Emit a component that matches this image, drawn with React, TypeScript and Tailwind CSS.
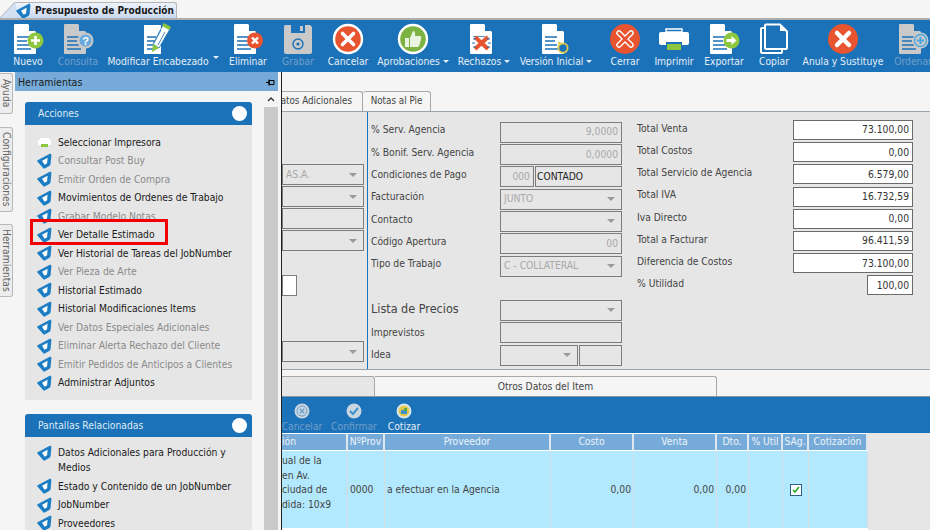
import React from "react";

const font = "[font-family:'DejaVu_Sans',sans-serif] [font-stretch:condensed]";

// page with folded corner, used by most toolbar buttons
const Page: React.FC<{ fill?: string }> = ({ fill = "#fff" }) => (
  <>
    <path d="M3 1h13l8 8v21a1 1 0 0 1-1 1H3a1 1 0 0 1-1-1V2a1 1 0 0 1 1-1z" fill={fill} />
    <path d="M17 1.500l6.500 6.500H17z" fill="#1c72b8" />
    <path d="M5 14h12M5 18h10M5 22h12M5 26h14" stroke="#1c72b8" strokeWidth="1.400" />
  </>
);

const NuevoIcon = () => (
  <svg width="32" height="32" viewBox="0 0 32 32">
    <Page />
    <circle cx="23.500" cy="17.500" r="8" fill="#8dc63f" />
    <path d="M23.500 13v9M19 17.500h9" stroke="#fff" strokeWidth="2.600" />
  </svg>
);
const ConsultaIcon = () => (
  <svg width="32" height="32" viewBox="0 0 32 32">
    <Page fill="#c9c9c9" />
    <circle cx="23.500" cy="17.500" r="8" fill="#c9c9c9" />
    <circle cx="23.500" cy="17.500" r="6" fill="#6aa9dc" />
    <text x="23.500" y="21.500" textAnchor="middle" fontSize="11" fontWeight="700" fill="#fff" fontFamily="Liberation Sans">?</text>
  </svg>
);
const ModificarIcon = () => (
  <svg width="32" height="32" viewBox="0 0 32 32">
    <path d="M2 2h17v29H2z" fill="#fff" />
    <path d="M5 14h9M5 18h8M5 22h7M5 26h9" stroke="#1c72b8" strokeWidth="1.400" />
    <path d="M21 2l7 4-11 19-6-4z" fill="#fff" stroke="#1c72b8" strokeWidth=".8" />
    <path d="M22 0l7 4-2 3-7-4z" fill="#8dc63f" />
    <path d="M11 21l6 4-7 4z" fill="#8dc63f" />
    <path d="M19 7l-7 13M23 9l-7 13" stroke="#1c72b8" strokeWidth=".8" />
  </svg>
);
const EliminarIcon = () => (
  <svg width="32" height="32" viewBox="0 0 32 32">
    <Page />
    <circle cx="23" cy="17.500" r="8" fill="#e8542f" />
    <path d="M20 14.500l6 6M26 14.500l-6 6" stroke="#fff" strokeWidth="2.400" />
  </svg>
);
const GrabarIcon = () => (
  <svg width="32" height="32" viewBox="0 0 32 32">
    <path d="M3 2h25l2 2v25a2 2 0 0 1-2 2H4a2 2 0 0 1-2-2V3z" fill="#c9c9c9" />
    <path d="M9 2h14v8H9z" fill="#1c72b8" />
    <path d="M18 3h3v5h-3z" fill="#c9c9c9" />
    <circle cx="16" cy="21" r="5" fill="none" stroke="#1c72b8" strokeWidth="1.400" />
    <circle cx="16" cy="21" r="1.600" fill="#1c72b8" />
  </svg>
);
const CancelarIcon = () => (
  <svg width="32" height="32" viewBox="0 0 32 32">
    <circle cx="16" cy="16" r="14" fill="#e8542f" stroke="#fff" strokeWidth="2.400" />
    <path d="M10.500 10.500l11 11M21.500 10.500l-11 11" stroke="#fff" strokeWidth="3.600" strokeLinecap="round" />
  </svg>
);
const AprobacionesIcon = () => (
  <svg width="32" height="32" viewBox="0 0 32 32">
    <circle cx="16" cy="16" r="14" fill="#7cb342" stroke="#fff" strokeWidth="2.400" />
    <path d="M8 15h4v9H8zM13 15l3-7c2 0 2.500 2 2 5h5c1.500 0 1.500 2 1 3l-1.500 6c-.3 1-1 2-2 2H13z" fill="#fff" fillOpacity=".85" />
  </svg>
);
const RechazosIcon = () => (
  <svg width="32" height="32" viewBox="0 0 32 32">
    <Page />
    <path d="M2 14h22v14H2z" fill="#fff" />
    <path d="M7 14l13 12M20 14L7 26" stroke="#e8542f" strokeWidth="4" />
    <path d="M5 16h3M19 16h3M4 20h3M20 20h3M5 24h3M19 24h3" stroke="#1c72b8" strokeWidth="1" />
  </svg>
);
const VersionIcon = () => (
  <svg width="32" height="32" viewBox="0 0 32 32">
    <Page />
    <circle cx="23" cy="25" r="4.600" fill="#1c72b8" stroke="#e3c94a" strokeWidth="1.800" />
    <path d="M18 18l1 5 4-2z" fill="#e3c94a" />
  </svg>
);
const CerrarIcon = () => (
  <svg width="32" height="32" viewBox="0 0 32 32">
    <circle cx="16" cy="16" r="15" fill="#e8542f" />
    <path d="M10 10l12 12M22 10L10 22" stroke="#fff" strokeWidth="5.500" strokeLinecap="round" />
    <path d="M10 10l12 12M22 10L10 22" stroke="#e8542f" strokeWidth="2.800" strokeLinecap="round" />
  </svg>
);
const ImprimirIcon = () => (
  <svg width="32" height="32" viewBox="0 0 32 32">
    <path d="M8 6h16v3H8z" fill="none" stroke="#fff" strokeWidth="1.400" />
    <path d="M3 9h26a2 2 0 0 1 2 2v9a2 2 0 0 1-2 2H3a2 2 0 0 1-2-2v-9a2 2 0 0 1 2-2z" fill="#fff" />
    <path d="M8 19h16v8H8z" fill="#1c72b8" />
    <path d="M9 21h14v6H9z" fill="#8dc63f" />
  </svg>
);
const ExportarIcon = () => (
  <svg width="32" height="32" viewBox="0 0 32 32">
    <Page />
    <circle cx="23.500" cy="17.500" r="8" fill="#8dc63f" />
    <path d="M18.500 16h5v-3l5 4.500-5 4.500v-3h-5z" fill="#fff" />
  </svg>
);
const CopiarIcon = () => (
  <svg width="32" height="32" viewBox="0 0 32 32">
    <path d="M6 5H4a1 1 0 0 0-1 1v23a1 1 0 0 0 1 1h19a1 1 0 0 0 1-1v-2" fill="none" stroke="#fff" strokeWidth="2" />
    <path d="M8 1.500h14l7 7V25a1 1 0 0 1-1 1H8a1 1 0 0 1-1-1V2.500a1 1 0 0 1 1-1z" fill="#1c72b8" stroke="#fff" strokeWidth="2" />
    <path d="M22 2v6h6z" fill="#fff" />
  </svg>
);
const AnulaIcon = () => (
  <svg width="32" height="32" viewBox="0 0 32 32">
    <circle cx="16" cy="16" r="15" fill="#e8542f" />
    <path d="M10 10l12 12M22 10L10 22" stroke="#fff" strokeWidth="4.500" strokeLinecap="round" />
  </svg>
);
const OrdenarIcon = () => (
  <svg width="32" height="32" viewBox="0 0 32 32">
    <Page fill="#c9c9c9" />
    <circle cx="23.500" cy="17.500" r="8" fill="#c9c9c9" />
    <circle cx="23.500" cy="17.500" r="6" fill="none" stroke="#4aa8e0" strokeWidth="1.400" />
    <path d="M23.500 14v7M20 17.500h7" stroke="#4aa8e0" strokeWidth="2" />
  </svg>
);

// small blue shield in front of the action links
const Shield = () => (
  <svg width="15" height="16" viewBox="0 0 15 16" className="shrink-0">
    <path d="M.6 7.200L12.400 1c1.200-.6 2.100 0 2 1.300l-.8 8.500c-.1 1-.5 1.600-1.400 2.100l-4.400 2.500c-.7.400-1.300.2-1.700-.4L.4 8.600C.1 8 .1 7.500.6 7.200z" fill="#1c7dc4" />
    <path d="M5 7.700l5.600-2.900-.5 5.400-2.500 1.500z" fill="#fff" />
  </svg>
);

const PrinterSmall = () => (
  <svg width="15" height="15" viewBox="0 0 15 15" className="shrink-0">
    <path d="M3 3h9v2H3z" fill="#fff" />
    <path d="M1 5h13v5H1z" fill="#fff" />
    <path d="M4 9h7v3H4z" fill="#8dc63f" />
  </svg>
);

type ToolItem = { label: string; icon: React.ReactNode; w: string; off?: boolean; caret?: boolean; split?: boolean };

const tools: ToolItem[] = [
  { label: "Nuevo", icon: <NuevoIcon />, w: "w-[50px]" },
  { label: "Consulta", icon: <ConsultaIcon />, off: true, w: "w-[50px]" },
  { label: "Modificar Encabezado", icon: <ModificarIcon />, w: "w-[110px]", split: true },
  { label: "Eliminar", icon: <EliminarIcon />, w: "w-[50px]" },
  { label: "Grabar", icon: <GrabarIcon />, off: true, w: "w-[50px]" },
  { label: "Cancelar", icon: <CancelarIcon />, w: "w-[50px]" },
  { label: "Aprobaciones", icon: <AprobacionesIcon />, w: "w-[80px]", caret: true },
  { label: "Rechazos", icon: <RechazosIcon />, w: "w-[62px]", caret: true },
  { label: "Versión Inicial", icon: <VersionIcon />, w: "w-[82px]", caret: true },
  { label: "Cerrar", icon: <CerrarIcon />, w: "w-[56px]" },
  { label: "Imprimir", icon: <ImprimirIcon />, w: "w-[42px]" },
  { label: "Exportar", icon: <ExportarIcon />, w: "w-[58px]" },
  { label: "Copiar", icon: <CopiarIcon />, w: "w-[42px]" },
  { label: "Anula y Sustituye", icon: <AnulaIcon />, w: "w-[96px]" },
  { label: "Ordenar", icon: <OrdenarIcon />, off: true, w: "w-[44px]" },
];

const ToolCaret = () => <span className="h-0 w-0 border-x-[3px] border-t-[3px] border-x-transparent border-t-[#e4eef7]" />;

const Toolbar = () => (
  <div className="flex h-[54px] shrink-0 overflow-hidden border-t-2 border-[#adadad] bg-[#1c72b8] pl-[3px]">
    {tools.map((t) => (
      <React.Fragment key={t.label}>
        <div className={`${t.w} flex shrink-0 flex-col items-center pt-[3px]`}>
          <div className="h-[32px]">{t.icon}</div>
          <div className={`flex items-center gap-[3px] whitespace-nowrap text-[10.25px] leading-[12px] ${t.off ? "text-[#6f9fca]" : "text-[#e4eef7]"}`}>
            {t.label}
            {t.caret && <ToolCaret />}
          </div>
        </div>
        {t.split && (
          <div className="flex w-[10px] shrink-0 items-start pt-[36px]">
            <ToolCaret />
          </div>
        )}
      </React.Fragment>
    ))}
  </div>
);

const VerticalTab: React.FC<{ label: string; h: string }> = ({ label, h }) => (
  <div className={`${h} flex w-[13px] items-center justify-center rounded-r-[3px] border border-l-0 border-[#b8b8b8] bg-[#ededed]`}>
    <span className="whitespace-nowrap text-[10.25px] text-[#666] [writing-mode:vertical-rl]">{label}</span>
  </div>
);

const actions: [string, boolean][] = [
  ["Consultar Post Buy", false],
  ["Emitir Orden de Compra", false],
  ["Movimientos de Ordenes de Trabajo", true],
  ["Grabar Modelo Notas", false],
  ["Ver Detalle Estimado", true],
  ["Ver Historial de Tareas del JobNumber", true],
  ["Ver Pieza de Arte", false],
  ["Historial Estimado", true],
  ["Historial Modificaciones Items", true],
  ["Ver Datos Especiales Adicionales", false],
  ["Eliminar Alerta Rechazo del Cliente", false],
  ["Emitir Pedidos de Anticipos a Clientes", false],
  ["Administrar Adjuntos", true],
];

const related = ["Estado y Contenido de un JobNumber", "JobNumber", "Proveedores"];

const ActionRow: React.FC<{ text: string; on?: boolean; icon?: React.ReactNode }> = ({ text, on = true, icon }) => (
  <div className="flex h-[18.5px] items-center gap-[6px] pl-[12px]">
    {icon ?? <Shield />}
    <span className={`whitespace-nowrap text-[10.25px] ${on ? "text-[#1a1a1a]" : "text-[#8a8a8a]"}`}>{text}</span>
  </div>
);

const SectionHead: React.FC<{ title: string }> = ({ title }) => (
  <div className="flex h-[23px] items-center justify-between rounded-t-[3px] bg-[#1c72b8] pl-[13px] pr-[5px]">
    <span className="pt-[1px] text-[10.25px] text-[#dfeaf4]">{title}</span>
    <span className="h-[15px] w-[15px] rounded-full bg-white" />
  </div>
);

const Herramientas = () => (
  <div className="flex h-full w-[263px] shrink-0 flex-col bg-[#f5f5f5]">
    <div className="flex h-[19px] shrink-0 items-center justify-between bg-[#76abd9] px-[3px] pt-[3px]">
      <span className="text-[10.5px] text-[#1a1a1a]">Herramientas</span>
      <svg width="9" height="9" viewBox="0 0 9 9">
        <path d="M3 1.500h5v4H3zM3 .5v6M0 3.500h3" fill="none" stroke="#000" strokeWidth="1" />
      </svg>
    </div>
    <div className="flex min-h-0 flex-1">
      <div className="w-[249px] shrink-0 overflow-hidden pl-[10px] pr-[12px] pt-[11px]">
        <SectionHead title="Acciones" />
        <div className="bg-[#e6e6e6] py-[8px]">
          <ActionRow text="Seleccionar Impresora" icon={<PrinterSmall />} />
          {actions.map(([text, on]) => (
            <ActionRow key={text} text={text} on={on} />
          ))}
        </div>
        <div className="mt-[14px]">
          <SectionHead title="Pantallas Relacionadas" />
          <div className="bg-[#e6e6e6] pb-[8px] pt-[8px]">
            <div className="mb-[2px] flex items-start gap-[6px] pl-[12px]">
              <Shield />
              <span className="text-[10.25px] leading-[15px] text-[#1a1a1a]">Datos Adicionales para Producción y Medios</span>
            </div>
            {related.map((r) => (
              <ActionRow key={r} text={r} />
            ))}
          </div>
        </div>
      </div>
      <div className="flex w-[14px] shrink-0 flex-col bg-[#f5f5f5]">
        <div className="flex h-[16px] items-center justify-center">
          <svg width="8" height="6" viewBox="0 0 8 6">
            <path d="M1 5l3-3 3 3" fill="none" stroke="#333" strokeWidth="1.400" />
          </svg>
        </div>
        <div className="flex-1 bg-[#c9c9c9]" />
      </div>
    </div>
  </div>
);

const box = "h-[21px] border border-[#7d7d7d] bg-[#e6e6e6]";

const Caret = () => <span className="ml-auto h-0 w-0 border-x-[4px] border-t-[4px] border-x-transparent border-t-[#9a9a9a]" />;

const SelectBox: React.FC<{ text?: string; className?: string }> = ({ text, className = "w-full" }) => (
  <div className={`${box} ${className} flex items-center px-[3px] pr-[6px] text-[10.25px] text-[#a8a8a8]`}>
    {text}
    <Caret />
  </div>
);

const ReadBox: React.FC<{ text?: string; className?: string }> = ({ text, className = "w-full" }) => (
  <div className={`${box} ${className} flex items-center justify-end px-[3px] text-[10.25px] text-[#a8a8a8]`}>{text}</div>
);

const MidRow: React.FC<{ label: string; labelCls?: string; children: React.ReactNode }> = ({ label, labelCls = "pb-[4px] text-[10.25px]", children }) => (
  <div className="flex h-[22.33px] items-center">
    <span className={`w-[129px] shrink-0 whitespace-nowrap ${labelCls} text-[#444]`}>{label}</span>
    <div className="flex w-[122px] gap-[1px]">{children}</div>
  </div>
);

const totals: [string, string][] = [
  ["Total Venta", "73.100,00"],
  ["Total Costos", "0,00"],
  ["Total Servicio de Agencia", "6.579,00"],
  ["Total IVA", "16.732,59"],
  ["Iva Directo", "0,00"],
  ["Total a Facturar", "96.411,59"],
  ["Diferencia de Costos", "73.100,00"],
];

const FormArea = () => (
  <div className="flex h-[259px] shrink-0 border-y border-[#9aa5ad] bg-[#e6e6e6]">
    {/* left column, cut by the panel */}
    <div className="flex w-[85px] shrink-0 flex-col pr-[3px] pt-[52px]">
      <div className="flex flex-col gap-[1px]">
        <SelectBox text="AS.A." />
        <SelectBox />
        <ReadBox />
        <SelectBox />
      </div>
      <div className="mt-[24px] h-[21px] w-[15px] border border-[#7d7d7d] bg-white" />
      <SelectBox className="mt-[45px] w-full" />
    </div>
    <div className="w-[259px] shrink-0 border-l border-[#1c72b8] pl-[3px] pt-[9px]">
      <MidRow label="% Serv. Agencia"><ReadBox text="9,0000" /></MidRow>
      <MidRow label="% Bonif. Serv. Agencia"><ReadBox text="0,0000" /></MidRow>
      <MidRow label="Condiciones de Pago">
        <ReadBox text="000" className="w-[34px] shrink-0" />
        <div className={`${box} flex-1 px-[1px] text-[10.25px] leading-[19px] text-[#222]`}>CONTADO</div>
      </MidRow>
      <MidRow label="Facturación"><SelectBox text="JUNTO" /></MidRow>
      <MidRow label="Contacto"><SelectBox /></MidRow>
      <MidRow label="Código Apertura"><ReadBox text="00" /></MidRow>
      <MidRow label="Tipo de Trabajo"><SelectBox text="C - COLLATERAL" /></MidRow>
      <div className="h-[22px]" />
      <MidRow label="Lista de Precios" labelCls="pb-[2px] text-[12.5px]"><SelectBox /></MidRow>
      <MidRow label="Imprevistos" labelCls="pb-0 text-[10.25px]"><ReadBox /></MidRow>
      <MidRow label="Idea" labelCls="pb-0 text-[10.25px]">
        <SelectBox className="w-[78px] shrink-0" />
        <ReadBox className="flex-1" />
      </MidRow>
    </div>
    <div className="flex-1 pl-[11px] pt-[7px]">
      {totals.map(([k, v]) => (
        <div key={k} className="flex h-[22.2px] items-center">
          <span className="w-[156px] shrink-0 whitespace-nowrap pb-[3px] text-[10.25px] text-[#444]">{k}</span>
          <div className="flex h-[20px] w-[120px] items-center justify-end border border-[#6b6b6b] bg-white px-[3px] text-[10.25px] text-[#333]">{v}</div>
        </div>
      ))}
      <div className="flex h-[22.2px] items-center">
        <span className="w-[230px] shrink-0 pb-[3px] text-[10.25px] text-[#444]">% Utilidad</span>
        <div className="flex h-[20px] w-[46px] items-center justify-end border border-[#6b6b6b] bg-white px-[3px] text-[10.25px] text-[#333]">100,00</div>
      </div>
    </div>
  </div>
);

const cols: { title: string; w: string; value?: string; cls?: string; head?: string }[] = [
  { title: "ión", w: "w-[66px]", cls: "!px-0", head: "justify-start" },
  { title: "NºProv", w: "w-[37px]", value: "0000" },
  { title: "Proveedor", w: "w-[166px]", value: "a efectuar en la Agencia" },
  { title: "Costo", w: "w-[83px]", value: "0,00", cls: "justify-end" },
  { title: "Venta", w: "w-[83px]", value: "0,00", cls: "justify-end" },
  { title: "Dto.", w: "w-[32px]", value: "0,00", cls: "justify-end" },
  { title: "% Util", w: "w-[34px]" },
  { title: "SAg.", w: "w-[26px]" },
  { title: "Cotización", w: "w-[59px]" },
];

const SmallCancel = () => (
  <svg width="16" height="16" viewBox="0 0 16 16">
    <circle cx="8" cy="8" r="7.500" fill="#c9d6e0" />
    <circle cx="8" cy="8" r="5" fill="none" stroke="#6aa0cc" strokeWidth="1" />
    <path d="M5.800 5.800l4.400 4.400M10.200 5.800l-4.400 4.400" stroke="#6aa0cc" strokeWidth="1.400" />
  </svg>
);
const SmallConfirm = () => (
  <svg width="16" height="16" viewBox="0 0 16 16">
    <circle cx="8" cy="8" r="7.500" fill="#c9d6e0" />
    <path d="M4 8l3 3 5-6" fill="none" stroke="#3f90d0" strokeWidth="2" />
  </svg>
);
const SmallCotizar = () => (
  <svg width="16" height="16" viewBox="0 0 16 16">
    <circle cx="8" cy="8" r="7.500" fill="#d8e6f0" />
    <circle cx="8" cy="8" r="5.500" fill="#e3c94a" />
    <path d="M5 7h6v4H5z" fill="#3f90d0" />
    <path d="M8 5h3v3H8z" fill="#5aa64a" />
  </svg>
);

const SmallTool: React.FC<{ label: string; w: string; off?: boolean; icon: React.ReactNode }> = ({ label, w, off, icon }) => (
  <div className={`${w} flex shrink-0 flex-col items-center`}>
    {icon}
    <span className={`mt-[1px] whitespace-nowrap text-[10.25px] leading-[12px] ${off ? "text-[#6f9fca]" : "text-[#e4eef7]"}`}>{label}</span>
  </div>
);

const Lower = () => (
  <div className="flex min-h-0 flex-1 flex-col bg-[#f5f5f5]">
    <div className="flex h-[27px] shrink-0 items-end border-b border-[#8a949c] pt-[6px]">
      <div className="h-full w-[93px] shrink-0 rounded-tr-[3px] border-r border-t border-[#a8a8a8] bg-[#e6e6e6]" />
      <div className="flex h-full w-[342px] shrink-0 items-center justify-center rounded-tr-[3px] border-r border-t border-[#a8a8a8] text-[10.25px] text-[#444]">Otros Datos del Item</div>
    </div>
    <div className="flex h-[36px] shrink-0 items-start bg-[#1c72b8] pt-[6px]">
      <SmallTool label="Cancelar" off w="w-[40px]" icon={<SmallCancel />} />
      <div className="w-[5px] shrink-0" />
      <SmallTool label="Confirmar" off w="w-[54px]" icon={<SmallConfirm />} />
      <SmallTool label="Cotizar" w="w-[46px]" icon={<SmallCotizar />} />
    </div>
    <div className="flex min-h-0 flex-1 bg-[#e6e6e6]">
      <div className="w-[586px] shrink-0 bg-white">
        <div className="flex h-[18px] border-y border-white bg-[#76abd9]">
          {cols.map((c) => (
            <div key={c.title} className={`${c.w} flex shrink-0 items-center ${c.head ?? "justify-center"} whitespace-nowrap border-r-2 border-[#dfe7ee] text-[10.25px] text-[#eef4fa]`}>{c.title}</div>
          ))}
        </div>
        <div className="flex h-[77px] bg-[#b3e9fe]">
          {cols.map((c) => (
            <div key={c.title} className={`${c.w} flex shrink-0 items-center overflow-hidden whitespace-nowrap border-r border-[#d5dde2] px-[2px] text-[10.25px] text-[#444] ${c.cls ?? ""}`}>
              {c.title === "ión" && (
                <div className="leading-[14.5px]">
                  ual de la<br />en Av.<br />ciudad de<br />dida: 10x9<br />&nbsp;
                </div>
              )}
              {c.value}
              {c.title === "SAg." && (
                <div className="mx-auto flex h-[12px] w-[12px] items-center justify-center border border-[#2f5f8f] bg-white">
                  <svg width="8" height="8" viewBox="0 0 8 8">
                    <path d="M1 4l2 2 4-5" fill="none" stroke="#2aa52a" strokeWidth="1.600" />
                  </svg>
                </div>
              )}
            </div>
          ))}
        </div>
      </div>
    </div>
  </div>
);

export default function App() {
  return (
    <div className={`flex h-[530px] w-[930px] flex-col overflow-hidden bg-[#f5f5f5] ${font}`}>
      {/* window tab */}
      <div className="flex h-[18px] shrink-0 items-end">
        <svg width="16" height="16" viewBox="0 0 16 16" className="shrink-0">
          <path d="M0 16L14 1q1-1 2-1v16z" fill="#d3e0f3" />
          <path d="M0 16L14 1q1-1 2-1" fill="none" stroke="#b5b5b5" />
        </svg>
        <div className="flex h-[16px] w-[161px] items-center gap-[4px] rounded-tr-[3px] border-r border-t border-[#b5b5b5] bg-gradient-to-b from-[#eef3fb] to-[#c9d9f1]">
          <Shield />
          <span className="whitespace-nowrap text-[10px] font-bold text-[#1a1a1a]">Presupuesto de Producción</span>
        </div>
      </div>
      <Toolbar />
      <div className="flex min-h-0 flex-1">
        {/* collapsed side tabs */}
        <div className="flex w-[15px] shrink-0 flex-col pt-[1px]">
          <VerticalTab label="Ayuda" h="h-[41px]" />
          <div className="h-[13px]" />
          <VerticalTab label="Configuraciones" h="h-[85px]" />
          <div className="h-[12px]" />
          <VerticalTab label="Herramientas" h="h-[73px]" />
        </div>
        <div className="relative flex min-w-0 flex-1">
          <Herramientas />
          {/* red highlight over the list */}
          <div className="absolute left-[15px] top-[147px] h-[26px] w-[138px] border-[3px] border-[#f00000]" />
          <div className="w-[3px] shrink-0 bg-[#f5f5f5]" />
          <div className="w-[1px] shrink-0 bg-[#222]" />
          <div className="flex min-w-0 flex-1 flex-col">
            <div className="h-[19px] shrink-0" />
            <div className="flex h-[20px] shrink-0 items-end">
              <div className="flex h-[20px] w-[81px] items-center justify-end overflow-hidden whitespace-nowrap rounded-tr-[3px] border-r border-t border-[#a8a8a8] pr-[10px] text-[9.75px] text-[#444]">atos Adicionales</div>
              <div className="flex h-[20px] w-[68px] items-center justify-center rounded-t-[3px] border-r border-t border-[#a8a8a8] text-[9.75px] text-[#444]">Notas al Pie</div>
            </div>
            <FormArea />
            <Lower />
          </div>
        </div>
      </div>
    </div>
  );
}
